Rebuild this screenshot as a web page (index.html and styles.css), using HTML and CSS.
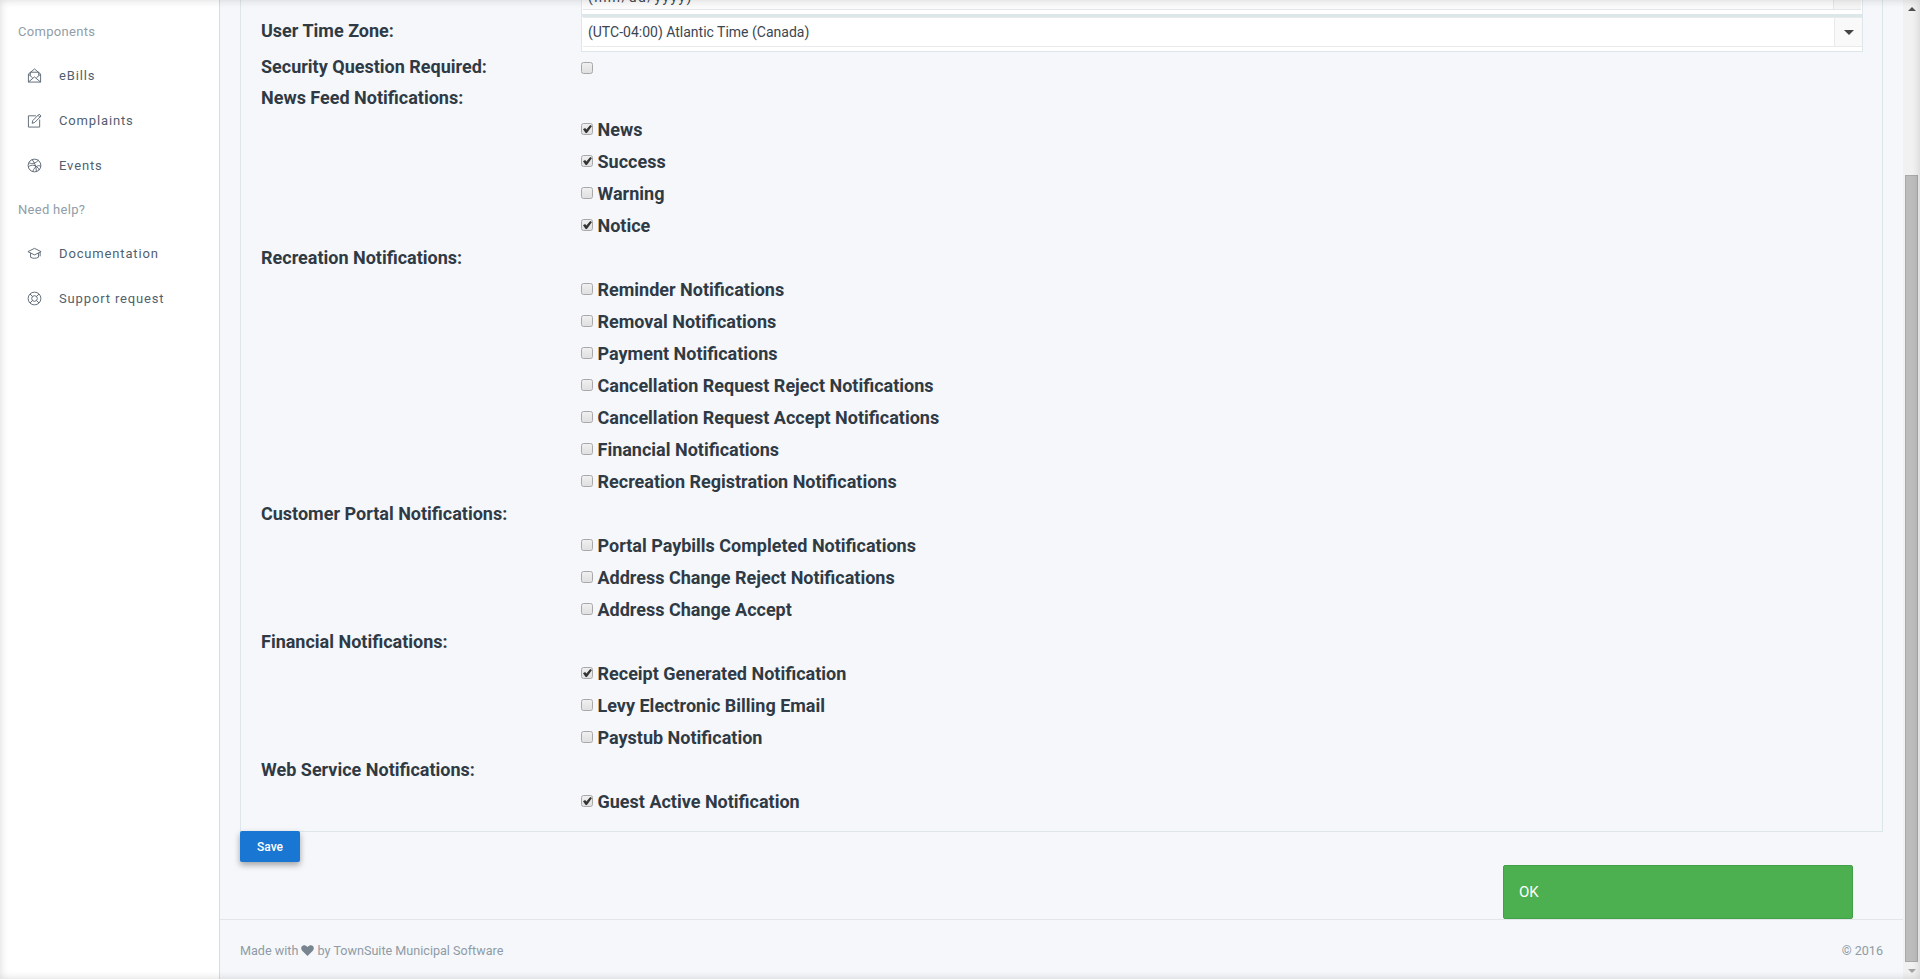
FILE: index.html
```html
<!DOCTYPE html>
<html lang="en">
<head>
<meta charset="utf-8">
<title>User Settings</title>
<link rel="stylesheet" href="styles.css">
</head>
<body>
<div class="app">
  <aside class="sidebar">
    <div class="nav-heading">Components</div>
    <a class="nav-item"><svg class="nav-icon" viewBox="0 0 16 16"><path d="M1.500 6.500 8 1l6.500 5.500V15h-13zM1.500 6.500 6 10.500M14.500 6.500 10 10.500M1.500 15 8 9.500l6.500 5.500M3.500 8V4.500h9V8"/></svg><span>eBills</span></a>
    <a class="nav-item"><svg class="nav-icon" viewBox="0 0 16 16"><path d="M9.500 3H1.500v12h12V7M5.500 11l.7-3L13 1.200l2 2L8.300 10zM11.800 2.500l2 2"/></svg><span>Complaints</span></a>
    <a class="nav-item"><svg class="nav-icon" viewBox="0 0 16 16"><circle cx="8" cy="8" r="6.800"/><path d="M2 5.200c4 1.500 7 .6 10.300-3M1.200 9.500C5 6.500 10 7 13.400 13M5.500 1.800C8 5 10 9 10 14.500M14.800 8.500c-3-.7-6-.4-8.800 6"/></svg><span>Events</span></a>
    <div class="nav-heading">Need help?</div>
    <a class="nav-item"><svg class="nav-icon" viewBox="0 0 16 16"><path d="M8 2.500 1 6l7 3.500L15 6zM3.800 7.500V12c2.500 1.500 6 1.500 8.400 0V7.500M14 6.500V11"/></svg><span>Documentation</span></a>
    <a class="nav-item"><svg class="nav-icon" viewBox="0 0 16 16"><circle cx="8" cy="8" r="6.800"/><circle cx="8" cy="8" r="3"/><path d="M3.200 3.200 5.900 5.900M12.800 3.200 10.100 5.900M3.200 12.800 5.900 10.100M12.800 12.800 10.100 10.100"/></svg><span>Support request</span></a>
  </aside>

  <div class="main">
    <div class="content">
      <section class="panel">
        <div class="row row-zone">
          <label class="field-label">User Time Zone:</label>
          <div class="field">
            <div class="clipped-box"><div class="clipped-input"><span class="clipped-text">(mm/dd/yyyy)</span><span class="clipped-btn"></span></div></div>
            <div class="select-box">
              <div class="select-inner">
                <span class="select-value">(UTC-04:00) Atlantic Time (Canada)</span>
                <span class="select-btn"><i class="caret"></i></span>
              </div>
            </div>
          </div>
        </div>
        <div class="row row-heading"><label class="field-label">Security Question Required:</label><div class="field"><input class="check check-solo" type="checkbox"></div></div>
        <div class="row row-heading"><label class="field-label">News Feed Notifications:</label></div>
        <div class="row"><label class="option"><input class="check" type="checkbox" checked>News</label></div>
        <div class="row"><label class="option"><input class="check" type="checkbox" checked>Success</label></div>
        <div class="row"><label class="option"><input class="check" type="checkbox">Warning</label></div>
        <div class="row"><label class="option"><input class="check" type="checkbox" checked>Notice</label></div>
        <div class="row row-heading"><label class="field-label">Recreation Notifications:</label></div>
        <div class="row"><label class="option"><input class="check" type="checkbox">Reminder Notifications</label></div>
        <div class="row"><label class="option"><input class="check" type="checkbox">Removal Notifications</label></div>
        <div class="row"><label class="option"><input class="check" type="checkbox">Payment Notifications</label></div>
        <div class="row"><label class="option"><input class="check" type="checkbox">Cancellation Request Reject Notifications</label></div>
        <div class="row"><label class="option"><input class="check" type="checkbox">Cancellation Request Accept Notifications</label></div>
        <div class="row"><label class="option"><input class="check" type="checkbox">Financial Notifications</label></div>
        <div class="row"><label class="option"><input class="check" type="checkbox">Recreation Registration Notifications</label></div>
        <div class="row row-heading"><label class="field-label">Customer Portal Notifications:</label></div>
        <div class="row"><label class="option"><input class="check" type="checkbox">Portal Paybills Completed Notifications</label></div>
        <div class="row"><label class="option"><input class="check" type="checkbox">Address Change Reject Notifications</label></div>
        <div class="row"><label class="option"><input class="check" type="checkbox">Address Change Accept</label></div>
        <div class="row row-heading"><label class="field-label">Financial Notifications:</label></div>
        <div class="row"><label class="option"><input class="check" type="checkbox" checked>Receipt Generated Notification</label></div>
        <div class="row"><label class="option"><input class="check" type="checkbox">Levy Electronic Billing Email</label></div>
        <div class="row"><label class="option"><input class="check" type="checkbox">Paystub Notification</label></div>
        <div class="row row-heading"><label class="field-label">Web Service Notifications:</label></div>
        <div class="row"><label class="option"><input class="check" type="checkbox" checked>Guest Active Notification</label></div>
      </section>
      <button class="btn-save" type="button">Save</button>
      <div class="alert-wrap"><div class="alert-ok">OK</div></div>
    </div>
    <footer class="footer">
      <span>Made with <svg class="heart" viewBox="0 0 14 12"><path d="M7 12 1.200 6.300C-.3 4.700-.2 2.400 1.100 1.100 2.600-.3 5-.2 7 2.200 9-.2 11.400-.3 12.900 1.100c1.300 1.300 1.400 3.600-.1 5.200z"/></svg> by TownSuite Municipal Software</span>
      <span>© 2016</span>
    </footer>
  </div>

  <div class="scrollbar">
    <span class="arrow arrow-up"></span>
    <div class="scroll-track"><div class="scroll-thumb"></div></div>
    <span class="arrow arrow-down"></span>
  </div>
</div>
<div class="window-shade"></div>
</body>
</html>
```

FILE: styles.css
```css
* { box-sizing: border-box; }
html, body { margin: 0; height: 100%; overflow: hidden; }
body {
  font-family: Roboto, "Liberation Sans", sans-serif;
  color: #2f3a44;
  background: #f5f7fb;
}
.app { display: flex; height: 979px; }

/* sidebar */
.sidebar {
  width: 220px;
  flex: none;
  background: #fff;
  border-right: 1px solid #d8dde0;
  padding-top: 10px;
}
.nav-heading {
  font-size: 13px;
  line-height: 43px;
  letter-spacing: .3px;
  color: #919da8;
  padding-left: 18px;
  height: 43px;
}
.nav-item {
  display: flex;
  align-items: center;
  height: 45px;
  padding-left: 27px;
  font-size: 13px;
  letter-spacing: .85px;
  color: #515f6e;
}
.nav-icon {
  width: 15px;
  height: 15px;
  margin-right: 17px;
  fill: none;
  stroke: #5b6672;
  stroke-width: 1;
  flex: none;
}

/* main */
.main { flex: 1; min-width: 0; display: flex; flex-direction: column; height: 979px; }
.content { flex: 1; padding: 0 20px; min-height: 0; position: relative; }
.panel {
  height: 832px;
  margin-bottom: -1px;
  border: 1px solid #dde6e9;
  border-top: 0;
  padding: 16px 19px 0 20px;
}
.row {
  display: flex;
  align-items: center;
  height: 32px;
  padding-left: 320px;
  position: relative;
}
.row-heading { padding-left: 0; }
.row-zone { padding-left: 0; height: 36px; align-items: flex-start; }
.row-zone + .row { height: 30px; }
.field-label {
  font-size: 18px;
  font-weight: 700;
  line-height: 30px;
  color: #2f3a44;
  width: 320px;
  flex: none;
}
.field { flex: 1; min-width: 0; }
.clipped-box {
  position: absolute;
  left: 320px;
  right: 0;
  top: -16px;
  height: 16px;
  background: #fff;
  border: 1px solid #dde6e9;
  border-top: 0;
  border-bottom-width: 2px;
  overflow: hidden;
}
.clipped-input {
  display: flex;
  height: 10px;
  margin: 0 1px;
  background: #fbfbfb;
  border-bottom: 1px solid #e4e7ea;
  font-size: 14px;
  overflow: hidden;
}
.clipped-text { flex: 1; padding-left: 5px; line-height: 0; margin-top: -3px; letter-spacing: 1.400px; color: #3b4651; }
.clipped-btn { width: 28px; border-left: 1px solid #e4e7ea; background: #f5f5f5; }
.select-box {
  height: 36px;
  background: #fff;
  border: 1px solid #dde6e9;
  padding: 0 0 5px 1px;
}
.select-inner {
  display: flex;
  height: 30px;
  border-bottom: 1px solid #e8eaec;
  border-top: 1px solid #e8eaec;
  align-items: stretch;
}
.select-value {
  flex: 1;
  padding-left: 5px;
  font-size: 14px;
  line-height: 29px;
  color: #3b4651;
}
.select-btn {
  width: 28px;
  display: flex;
  align-items: center;
  justify-content: center;
  background: #f9f9f9;
  border-left: 1px solid #e8eaec;
}
.caret {
  width: 0;
  height: 0;
  border-left: 5px solid transparent;
  border-right: 5px solid transparent;
  border-top: 5px solid #444;
}
.option {
  display: flex;
  align-items: center;
  font-size: 18px;
  font-weight: 700;
  line-height: 30px;
  color: #2f3a44;
}
.check {
  appearance: none;
  -webkit-appearance: none;
  width: 12px;
  height: 12px;
  margin: 0 4.500px 2px 0;
  flex: none;
  border: 1px solid #a8a8a8;
  border-radius: 2.500px;
  background: linear-gradient(#efefef, #e0e0e0);
  position: relative;
}
.check-solo { display: block; margin: 1px 0 0; }
.check:checked::after {
  content: "";
  position: absolute;
  left: 1px;
  top: 1px;
  width: 9px;
  height: 8px;
  background: #333;
  clip-path: polygon(0 52%, 24% 36%, 38% 56%, 80% 0, 100% 14%, 44% 100%, 30% 100%);
}

/* actions */
.btn-save {
  display: block;
  width: 60px;
  height: 31px;
  border: 0;
  border-radius: 2px;
  background: #1976d2;
  color: #fff;
  font: 500 12px Roboto, sans-serif;
  box-shadow: 0 3px 6px rgba(0,0,0,.35);
  padding: 0;
  position: relative;
}
.alert-wrap { display: flex; justify-content: flex-end; padding: 3px 30px 0 0; }
.alert-ok {
  width: 350px;
  height: 54px;
  background: #4caf50;
  border: 1px solid #43a047;
  border-radius: 2px;
  color: #fff;
  font-size: 15px;
  line-height: 52px;
  padding-left: 15px;
}

/* footer */
.footer {
  flex: none;
  height: 60px;
  border-top: 1px solid #e2e6ea;
  padding: 23px 20px 0;
  display: flex;
  justify-content: space-between;
  font-size: 12.600px;
  line-height: 16px;
  color: #8f9ba5;
}
.heart { width: 13px; height: 11px; fill: #78848f; vertical-align: -1px; }

/* scrollbar */
.scrollbar {
  width: 17px;
  flex: none;
  background: #f1f1f1;
  display: flex;
  flex-direction: column;
}
.arrow { height: 17px; flex: none; display: flex; align-items: center; justify-content: center; }
.arrow::before { content: ""; width: 0; height: 0; border-left: 4px solid transparent; border-right: 4px solid transparent; }
.arrow-up::before { border-bottom: 4px solid #505050; }
.arrow-down::before { border-top: 4px solid #a3a3a3; }
.scroll-track { flex: 1; display: flex; flex-direction: column; justify-content: flex-end; padding: 0 2px; }
.scroll-thumb { height: 787px; background: #bcbcbc; border: 1px solid #a9a9a9; }

/* soft vignette of the captured window */
.window-shade {
  position: fixed;
  inset: 0;
  pointer-events: none;
  box-shadow: inset 0 0 8px rgba(0,0,0,.16);
}
```
